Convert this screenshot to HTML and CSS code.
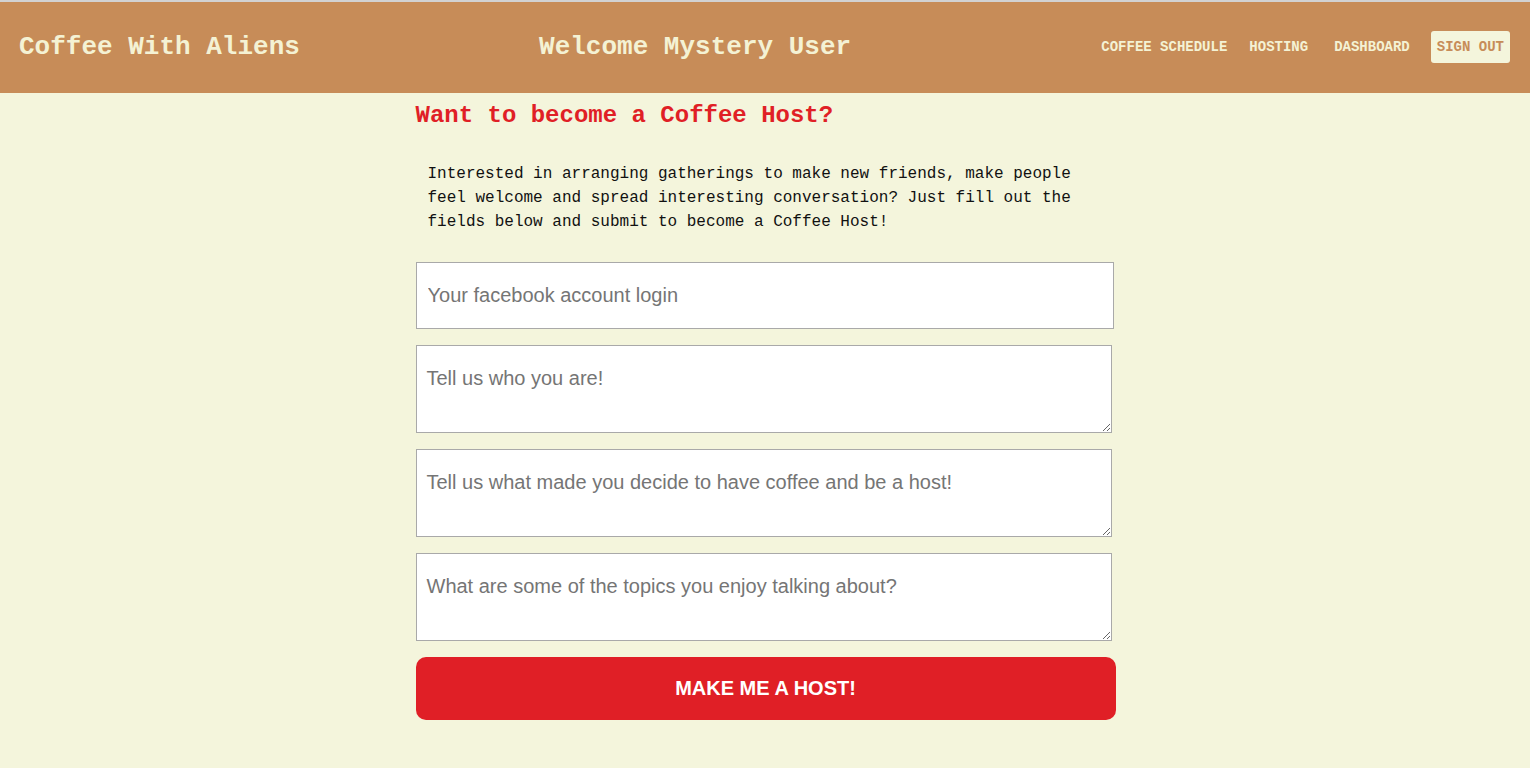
FILE: index.html
```html
<!DOCTYPE html>
<html lang="en">
<head>
<meta charset="utf-8">
<title>Coffee With Aliens</title>
<link rel="stylesheet" href="styles.css">
</head>
<body>
<header class="topbar">
  <div class="brand">Coffee With Aliens</div>
  <div class="welcome">Welcome Mystery User</div>
  <nav class="nav">
    <a class="nav-link" href="#">COFFEE SCHEDULE</a>
    <a class="nav-link" href="#">HOSTING</a>
    <a class="nav-link" href="#">DASHBOARD</a>
    <a class="nav-link signout" href="#">SIGN OUT</a>
  </nav>
</header>
<main class="content">
  <h1 class="title">Want to become a Coffee Host?</h1>
  <p class="intro">Interested in arranging gatherings to make new friends, make people feel welcome and spread interesting conversation? Just fill out the fields below and submit to become a Coffee Host!</p>
  <form class="form">
    <input class="field" type="text" placeholder="Your facebook account login">
    <textarea class="area" placeholder="Tell us who you are!"></textarea>
    <textarea class="area" placeholder="Tell us what made you decide to have coffee and be a host!"></textarea>
    <textarea class="area" placeholder="What are some of the topics you enjoy talking about?"></textarea>
    <button class="submit" type="button">MAKE ME A HOST!</button>
  </form>
</main>
</body>
</html>
```
FILE: styles.css
```css
html, body {
  margin: 0;
  padding: 0;
}
body {
  background: #f4f5dc;
  font-family: "Liberation Mono", "DejaVu Sans Mono", monospace;
  border-top: 2px solid #d2d2d2;
}
.topbar {
  background: #c78c58;
  height: 91px;
  box-sizing: border-box;
  padding: 0 20px 2px 19px;
  display: flex;
  justify-content: space-between;
  align-items: center;
  color: #f4f2d4;
}
.brand {
  font-weight: bold;
  font-size: 26px;
}
.welcome {
  font-weight: bold;
  font-size: 26px;
}
.nav {
  display: flex;
  align-items: center;
}
.nav-link {
  font-weight: bold;
  font-size: 14px;
  color: #f4f2d4;
  text-decoration: none;
  padding: 7px 11px;
}
.nav-link:nth-child(3) {
  margin-left: 4px;
}
.signout {
  background: #f4f5dc;
  color: #c78c58;
  border-radius: 3px;
  padding: 8px 6px;
  margin-left: 10px;
}
.content {
  width: 700px;
  margin: 0 auto;
  padding-left: 1px;
}
.title {
  margin: 9px 0 0;
  color: #e01f26;
  font-size: 24px;
  line-height: 28px;
  font-weight: bold;
}
.intro {
  margin: 32px 0 0;
  padding: 0 30px 0 12px;
  font-size: 16px;
  line-height: 24px;
  color: #111;
}
.form {
  display: flex;
  flex-direction: column;
  align-items: flex-start;
  margin-top: 28px;
}
.field, .area {
  font-family: "Liberation Sans", Arial, sans-serif;
  font-size: 20px;
  border: 1px solid #a9a9a9;
  background: #fff;
  box-sizing: border-box;
  margin: 0 0 16px;
}
.field::placeholder, .area::placeholder {
  color: #757575;
}
.field {
  width: 698px;
  height: 67px;
  padding: 0 11px;
}
.area {
  width: 696px;
  height: 88px;
  padding: 21px 10px 10px;
  resize: vertical;
  line-height: 23px;
}
.submit {
  width: 700px;
  height: 63px;
  border: none;
  border-radius: 10px;
  background: #e01f26;
  color: #fff;
  font-family: "Liberation Sans", Arial, sans-serif;
  font-size: 20px;
  font-weight: bold;
}
```
